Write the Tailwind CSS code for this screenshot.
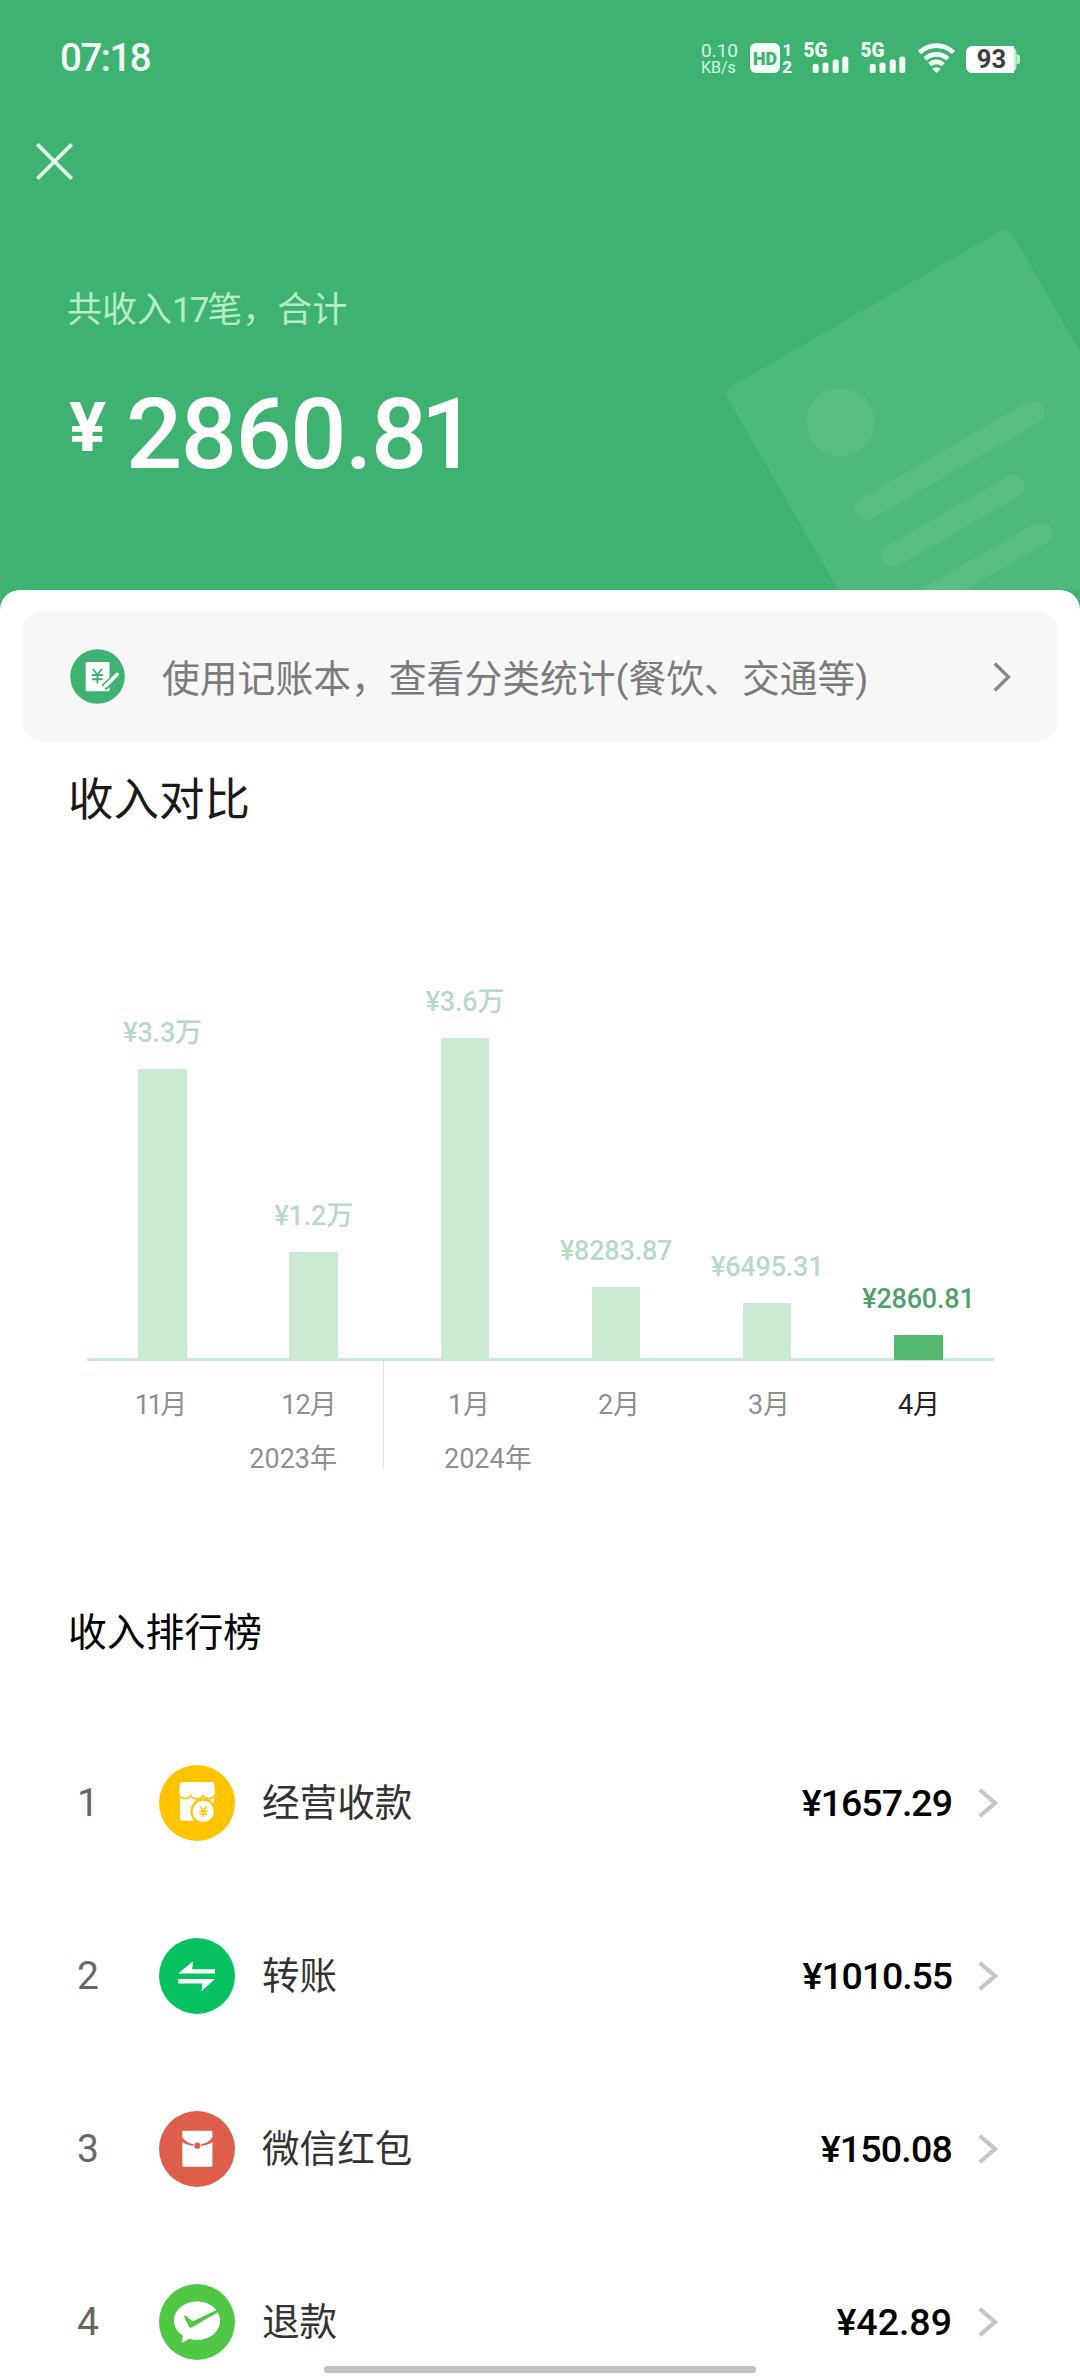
<!DOCTYPE html>
<html lang="zh-CN">
<head>
<meta charset="utf-8">
<title>收入统计</title>
<script src="https://cdn.jsdelivr.net/npm/@tailwindcss/browser@4"></script>
</head>
<body class="bg-white">
<div class="relative flex h-[2376px] w-[1080px] flex-col overflow-hidden bg-[#3eb371] font-['Roboto','Noto_Sans_CJK_SC',sans-serif]">

  <!-- Header -->
  <header class="relative h-[590px] shrink-0 overflow-hidden">
    <svg class="absolute inset-0" width="1080" height="590" viewBox="0 0 1080 590" fill="none">
      <rect x="723.500" y="391" width="328.500" height="460" rx="9" transform="rotate(-30 723.5 391)" fill="#fff" fill-opacity=".075"/>
      <circle cx="840.700" cy="422" r="34" fill="#fff" fill-opacity=".07"/>
      <g stroke="#fff" stroke-opacity=".07" stroke-width="23" stroke-linecap="round">
        <path d="M865.500 509L1033 412.500"/>
        <path d="M892.500 556L1013 486.500"/>
        <path d="M920 602.500L1040.500 533.500"/>
      </g>
    </svg>

    <!-- Status bar -->
    <div class="relative flex h-[116px] items-center justify-between pr-[60px] pl-[60px]">
      <span class="text-[38.500px] leading-none font-medium tracking-[-1.500px] text-[#f2fff7]">07:18</span>
      <div class="flex items-center text-[#d5f8e2]">
        <div class="flex w-[37px] flex-col pt-px">
          <span class="text-[19px] leading-[17px]">0.10</span>
          <span class="text-[16px] leading-[17px]">KB/s</span>
        </div>
        <svg class="ml-3 overflow-visible" width="43" height="30" viewBox="0 0 43 30">
          <rect width="30" height="30" rx="6" fill="#f2fff7"/>
          <text x="15" y="21.800" text-anchor="middle" font-family="Roboto" font-weight="900" font-size="18.500" textLength="24" lengthAdjust="spacingAndGlyphs" fill="#3eb371">HD</text>
          <text x="37.300" y="12.500" text-anchor="middle" font-family="Roboto" font-weight="700" font-size="17" fill="#f2fff7">1</text>
          <text x="37.300" y="29.500" text-anchor="middle" font-family="Roboto" font-weight="900" font-size="17" fill="#f2fff7">2</text>
        </svg>
        <svg class="ml-[11px] overflow-visible" width="45" height="30" viewBox="0 0 45 30" fill="#f2fff7">
          <text x="-.5" y="14" font-family="Roboto" font-weight="900" font-size="19.500" textLength="24" lengthAdjust="spacingAndGlyphs">5G</text>
          <rect x="8.700" y="21" width="6" height="9" rx="2"/><rect x="18.500" y="19.500" width="6" height="10.500" rx="2"/><rect x="28.700" y="16.500" width="6" height="13.500" rx="2"/><rect x="38.300" y="13.500" width="6" height="16.500" rx="2"/>
        </svg>
        <svg class="ml-3 overflow-visible" width="45" height="30" viewBox="0 0 45 30" fill="#f2fff7">
          <text x="-.5" y="14" font-family="Roboto" font-weight="900" font-size="19.500" textLength="24" lengthAdjust="spacingAndGlyphs">5G</text>
          <rect x="8.700" y="21" width="6" height="9" rx="2"/><rect x="18.500" y="19.500" width="6" height="10.500" rx="2"/><rect x="28.700" y="16.500" width="6" height="13.500" rx="2"/><rect x="38.300" y="13.500" width="6" height="16.500" rx="2"/>
        </svg>
        <svg class="ml-3 overflow-visible" width="37" height="30" viewBox="0 0 37 30" fill="none" stroke="#f2fff7" stroke-width="4.600">
          <path d="M1.500 9.500A24.500 24.500 0 0 1 35.500 9.500"/>
          <path d="M7 15.900A16.800 16.800 0 0 1 30 15.900"/>
          <path d="M11.800 21.600A9.600 9.600 0 0 1 25.200 21.600"/>
          <path d="M18.500 30L14.200 25.800A6.500 6.500 0 0 1 22.800 25.800Z" fill="#f2fff7" stroke="none"/>
        </svg>
        <svg class="ml-[11px]" width="54" height="30" viewBox="0 0 54 30">
          <rect x="0" y="3" width="50.500" height="27" rx="6.500" fill="#b9f0cd"/>
          <path d="M6.500 3H48V30H6.500A6.500 6.500 0 0 1 0 23.500V9.500A6.500 6.500 0 0 1 6.500 3Z" fill="#fff"/>
          <path d="M50.500 11.500h1a2.500 2.500 0 0 1 2.500 2.500v4.500a2.500 2.500 0 0 1-2.500 2.500h-1Z" fill="#b9f0cd"/>
          <text x="25.500" y="25.300" text-anchor="middle" font-family="Roboto" font-weight="700" font-size="25.500" fill="#3d3d3d">93</text>
        </svg>
      </div>
    </div>

    <!-- Close -->
    <div class="relative flex h-[91px] items-center pl-[36px]">
      <svg width="37" height="37" viewBox="0 0 37 37" stroke="#dcfbe8" stroke-width="3.800"><path d="M1.300 1.300L35.700 35.700M35.700 1.300L1.300 35.700"/></svg>
    </div>

    <p class="relative mt-[78.500px] pl-[67px] text-[35px] leading-[50px] text-[#b5edc9]">共收入<span class="tracking-[-2px]">17</span>笔，合计</p>
    <div class="relative mt-[48px] flex pl-[69px] leading-[100px] text-white">
      <span class="-mt-1.5 w-[57px] text-[69px] font-bold">¥</span>
      <span class="text-[99px] font-medium tracking-[-1.500px]">2860.8<span class="-ml-[5px]">1</span></span>
    </div>
  </header>

  <!-- Content sheet -->
  <main class="flex grow flex-col rounded-t-[20px] bg-white pt-[22px]">
    <a class="mx-[22px] flex h-[129px] shrink-0 items-center rounded-[20px] bg-[#f7f7f7] pr-[47px] pl-[48px]">
      <svg width="55" height="55" viewBox="0 0 55 55">
        <circle cx="27.500" cy="27.500" r="27.300" fill="#3eb371"/>
        <rect x="15.700" y="13" width="23.800" height="29.300" rx="1" fill="#fff"/>
        <path d="M23 20l4.400 5.500L31.800 20M27.400 25.500V34.500M22 26h10.800M22 30.200h10.800" fill="none" stroke="#3eb371" stroke-width="1.900"/>
        <path d="M34 38.500L48 25.200" stroke="#3eb371" stroke-width="7"/>
        <path d="M37 35.500L47 25.500" stroke="#fff" stroke-width="3.800" stroke-linecap="round"/>
        <path d="M32.500 39.500l2.300-4.700 3.200 3Z" fill="#fff"/>
      </svg>
      <span class="ml-[37px] pt-[4px] text-[37.800px] leading-[56px] whitespace-nowrap text-[#7b7b7b]">使用记账本，查看分类统计(餐饮、交通等)</span>
      <svg class="ml-auto" width="18" height="30" viewBox="0 0 18 30" fill="none" stroke="#888" stroke-width="3.400"><path d="M1.700 1.500L15.500 15L1.700 28.500"/></svg>
    </a>

    <h2 class="mt-[30px] shrink-0 pl-[68px] text-[45.500px] leading-[60px] text-[#1a1a1a]">收入对比</h2>

    <!-- Bar chart -->
    <section class="mx-[87px] mr-[86px] shrink-0">
      <div class="grid h-[529px] grid-cols-6 items-end text-[27px] leading-[30px] font-medium tracking-[-0.200px] text-[#b8dac4]">
        <div class="flex flex-col items-center gap-[21px]"><span>¥3.3万</span><i class="w-[48.500px] bg-[#cbead4]" style="height:291px"></i></div>
        <div class="flex flex-col items-center gap-[21px]"><span>¥1.2万</span><i class="w-[48.500px] bg-[#cbead4]" style="height:108px"></i></div>
        <div class="flex flex-col items-center gap-[21px]"><span>¥3.6万</span><i class="w-[48.500px] bg-[#cbead4]" style="height:322px"></i></div>
        <div class="flex flex-col items-center gap-[21px]"><span>¥8283.87</span><i class="w-[48.500px] bg-[#cbead4]" style="height:73px"></i></div>
        <div class="flex flex-col items-center gap-[21px]"><span>¥6495.31</span><i class="w-[48.500px] bg-[#cbead4]" style="height:57px"></i></div>
        <div class="flex flex-col items-center gap-[21px] text-[#4fa16b]"><span>¥2860.81</span><i class="w-[48.500px] bg-[#53b96e]" style="height:25px"></i></div>
      </div>
      <div class="-mt-[2px] h-[3px] bg-[#53b96e]/30"></div>
      <div class="flex h-[107px] text-[27px] leading-[40px] text-[#8f8f8f]">
        <div class="w-[297px] border-r border-[#e2e2e2] pt-[24px]">
          <div class="grid grid-cols-2 text-center"><span><span class="tracking-[-2.500px]">11</span>月</span><span><span class="tracking-[-1px]">12</span>月</span></div>
          <div class="mt-[14px] pr-[46px] text-right">2023年</div>
        </div>
        <div class="grow pt-[24px]">
          <div class="grid grid-cols-4 pl-[10px] text-center"><span>1月</span><span>2月</span><span>3月</span><span class="text-[#222]">4月</span></div>
          <div class="mt-[14px] pl-[60px]">2024年</div>
        </div>
      </div>
    </section>

    <!-- Ranking -->
    <h3 class="mt-[140px] shrink-0 pl-[68px] text-[38.800px] leading-[50px] text-black">收入排行榜</h3>
    <ul class="mt-[59px] shrink-0 pr-[81px] pl-[77px] text-[37.600px] leading-[54px] text-[#333]">
      <li class="flex h-[172.800px] items-center">
        <span class="w-[82px] text-[39px] text-[#666]">1</span>
        <svg width="76" height="76" viewBox="0 0 76 76">
          <circle cx="38" cy="38" r="38" fill="#ffc300"/>
          <path d="M21 28H55V55.700H23q-2 0-2-2Z" fill="#fff"/>
          <path d="M22.500 17h31q1.500 0 1.600 1.500l.7 8.500a5.900 5 0 0 1-11.800 1.500a6 4.500 0 0 1-12 0a5.900 5 0 0 1-11.800-1.500l.7-8.500q.1-1.500 1.600-1.500Z" fill="#fff" stroke="#ffc300" stroke-width="3.400" style="paint-order:stroke"/>
          <circle cx="44.300" cy="46.400" r="12.900" fill="#ffc300"/>
          <path d="M50 50h8v8H50Z" fill="#ffc300"/>
          <circle cx="44.300" cy="46.400" r="10.600" fill="#fff"/>
          <path d="M40.800 41.500l3.500 4.200 3.500-4.200M44.300 45.700V52M40.200 46.300h8.200M40.200 49.300h8.200" fill="none" stroke="#ffc300" stroke-width="1.500"/>
        </svg>
        <span class="ml-[27px]">经营收款</span>
        <span class="mr-[26px] ml-auto text-[37.500px] font-medium tracking-[-1px] text-black">¥1657.29</span>
        <svg width="21" height="30" viewBox="0 0 21 30" fill="none" stroke="#c6c6c6" stroke-width="4.200"><path d="M1.800 1.800L17 15L1.800 28.200"/></svg>
      </li>
      <li class="flex h-[172.800px] items-center">
        <span class="w-[82px] text-[39px] text-[#666]">2</span>
        <svg width="76" height="76" viewBox="0 0 76 76">
          <circle cx="38" cy="38" r="38" fill="#07c160"/>
          <path d="M19.300 35.600L34 23.300L33.200 31.300H56V35.600ZM19.300 41H56L42.500 53.200L43.300 45.500H19.300Z" fill="#fff"/>
        </svg>
        <span class="ml-[27px]">转账</span>
        <span class="mr-[26px] ml-auto text-[37.500px] font-medium tracking-[-1.100px] text-black">¥1010.55</span>
        <svg width="21" height="30" viewBox="0 0 21 30" fill="none" stroke="#c6c6c6" stroke-width="4.200"><path d="M1.800 1.800L17 15L1.800 28.200"/></svg>
      </li>
      <li class="flex h-[172.800px] items-center">
        <span class="w-[82px] text-[39px] text-[#666]">3</span>
        <svg width="76" height="76" viewBox="0 0 76 76">
          <circle cx="38" cy="38" r="38" fill="#de5e4c"/>
          <path d="M24.500 19.700H52.200q1.200 0 1.200 1.200V54.500q0 1.200-1.200 1.200H24.500q-1.200 0-1.200-1.200V20.900q0-1.200 1.200-1.200Z" fill="#fff"/>
          <path d="M22.500 25.500Q28 33.500 38.300 33.700Q48.700 33.500 54.200 25.500V30.500Q49 34.800 38.300 35.300Q28 34.800 22.500 30.500Z" fill="#de5e4c"/>
          <circle cx="38.300" cy="34.700" r="4" fill="#fff"/>
          <circle cx="38.300" cy="34.700" r="3.100" fill="#de5e4c"/>
        </svg>
        <span class="ml-[27px]">微信红包</span>
        <span class="mr-[26px] ml-auto text-[37.500px] font-medium tracking-[-0.800px] text-black">¥150.08</span>
        <svg width="21" height="30" viewBox="0 0 21 30" fill="none" stroke="#c6c6c6" stroke-width="4.200"><path d="M1.800 1.800L17 15L1.800 28.200"/></svg>
      </li>
      <li class="flex h-[172.800px] items-center">
        <span class="w-[82px] text-[39px] text-[#666]">4</span>
        <svg width="76" height="76" viewBox="0 0 76 76">
          <circle cx="38" cy="38" r="38" fill="#50c846"/>
          <path d="M38 17.500C50.700 17.500 61 26 61 36.800S50.700 56 38 56Q34 56 30.500 54.800L24.300 58.300Q22.500 59 22.800 57L24 51.800C18.500 48.300 15 43 15 36.800C15 26 25.300 17.500 38 17.500Z" fill="#fff"/>
          <path d="M25 32.300Q25.500 31 27 32L33 36.700Q34 37.200 35.500 36.600L58 25.800L59.800 27.800L33 43.300Q30.800 44.500 29.800 42.500Z" fill="#50c846"/>
        </svg>
        <span class="ml-[27px]">退款</span>
        <span class="mr-[26px] ml-auto text-[37.500px] font-medium text-black">¥42.89</span>
        <svg width="21" height="30" viewBox="0 0 21 30" fill="none" stroke="#c6c6c6" stroke-width="4.200"><path d="M1.800 1.800L17 15L1.800 28.200"/></svg>
      </li>
    </ul>
  </main>

  <!-- Home indicator -->
  <div class="absolute bottom-[3px] left-[324px] h-[7px] w-[432px] rounded-full bg-[#c1c1c1]"></div>
</div>
</body>
</html>
